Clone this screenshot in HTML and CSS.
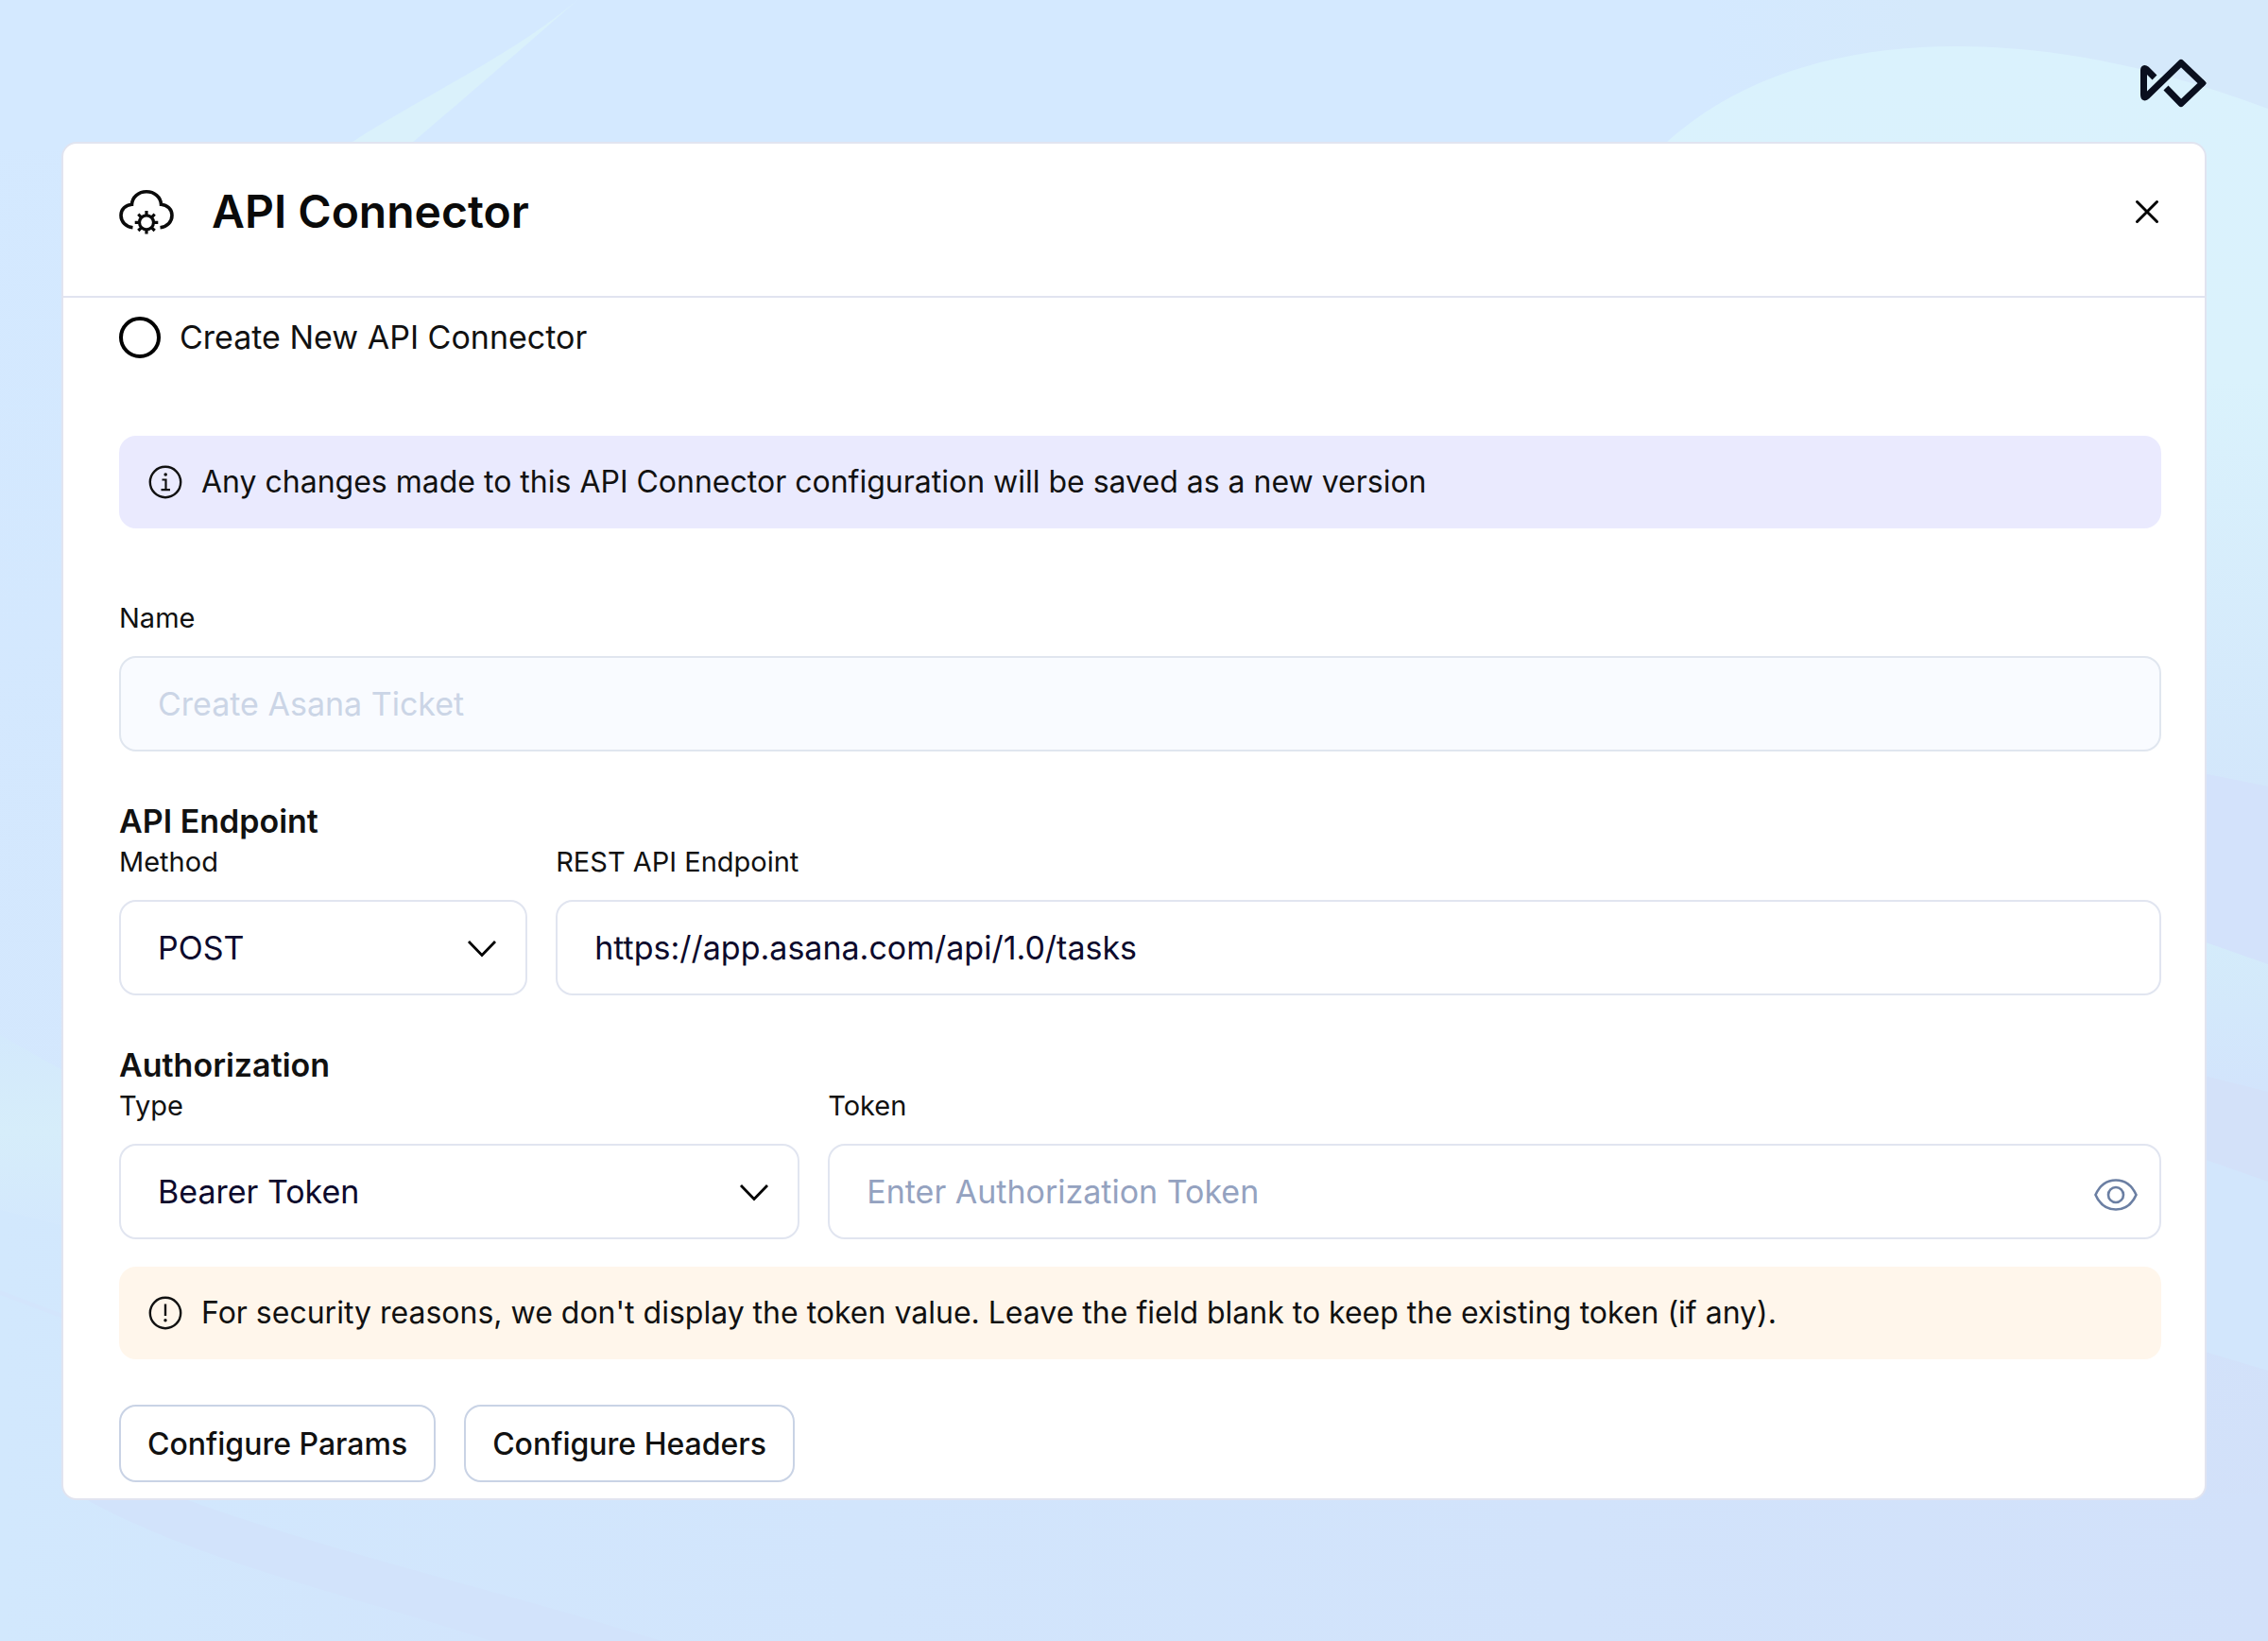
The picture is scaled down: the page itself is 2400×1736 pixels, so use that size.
FILE: index.html
```html
<!DOCTYPE html>
<html lang="en">
<head>
    <meta charset="UTF-8">
    <meta name="viewport" content="width=device-width, initial-scale=1.0">
    <title>API Connector</title>
    <link rel="stylesheet" href="styles.css">
</head>
<body>
    <svg class="backdrop" viewBox="0 0 2400 1736" preserveAspectRatio="none" aria-hidden="true">
        <defs>
            <linearGradient id="bg-base" x1="0" y1="0" x2="1" y2="1">
                <stop offset="0" stop-color="#d4e9ff"/>
                <stop offset="0.6" stop-color="#d3e6fc"/>
                <stop offset="1" stop-color="#d2e0f9"/>
            </linearGradient>
            <linearGradient id="bg-top" x1="0" y1="0" x2="1" y2="0">
                <stop offset="0" stop-color="#d4e9ff"/>
                <stop offset="0.75" stop-color="#d4e9ff"/>
                <stop offset="0.85" stop-color="#d5e9fb"/>
            </linearGradient>
            <linearGradient id="bg-right" x1="0" y1="0" x2="0" y2="1">
                <stop offset="0" stop-color="#daf2fd"/>
                <stop offset="0.45" stop-color="#daf2fc"/>
                <stop offset="1" stop-color="#d3e7fb"/>
            </linearGradient>
            <linearGradient id="bg-fade" x1="0" y1="0" x2="0" y2="1">
                <stop offset="0" stop-color="#d4ecfa"/>
                <stop offset="1" stop-color="#d2e4fc"/>
            </linearGradient>
            <linearGradient id="bg-left" x1="0" y1="0" x2="0" y2="1">
                <stop offset="0" stop-color="#d3e9fc"/>
                <stop offset="0.5" stop-color="#d6edfa"/>
                <stop offset="1" stop-color="#d3e8fd"/>
            </linearGradient>
            <linearGradient id="bg-bottom" x1="0" y1="0" x2="1" y2="0">
                <stop offset="0" stop-color="#d2e7fd"/>
                <stop offset="1" stop-color="#d2e1fa"/>
            </linearGradient>
            <linearGradient id="bg-corner" x1="0" y1="0" x2="1" y2="0">
                <stop offset="0" stop-color="#d2e8fd"/>
                <stop offset="1" stop-color="#d2e5fc"/>
            </linearGradient>
        </defs>
        <rect width="2400" height="1736" fill="url(#bg-base)"/>
        <rect width="2400" height="160" fill="url(#bg-top)"/>
        <path d="M611 0C540 60 450 100 370 152H435C490 105 560 45 611 0Z" fill="#daf1fb"/>
        <path d="M1762 152C1840 80 1950 49 2070 49C2190 49 2300 78 2400 115V832L2300 812V152Z" fill="url(#bg-right)"/>
        <path d="M2300 812L2400 832V1020L2300 985Z" fill="#d3e2fb"/>
        <path d="M2300 985L2400 1020V1155L2300 1130Z" fill="url(#bg-fade)"/>
        <path d="M2300 1130L2400 1155V1250L2300 1215Z" fill="#d3e1f9"/>
        <path d="M2300 1215L2400 1250V1450L2300 1420Z" fill="#d2e6fc"/>
        <path d="M0 1095L80 1140V1300L0 1280Z" fill="url(#bg-left)"/>
        <path d="M0 1280L80 1300V1580H180L520 1736H0Z" fill="url(#bg-corner)"/>
        <path d="M0 1365L80 1395V1400L0 1370Z" fill="#d3e5fc"/>
        <path d="M170 1580H2400V1736H700C520 1700 340 1640 170 1580Z" fill="url(#bg-bottom)"/>
        <path d="M80 1580H180C340 1640 520 1680 700 1736H520C380 1690 200 1650 80 1580Z" fill="#d2e3fb"/>
    </svg>

    <header class="brand">
        <svg class="brand-logo" viewBox="0 0 70 52" role="img" aria-label="Logo">
            <path d="M15 20L6.5 11.5Q3.5 9 3.5 12.5V38Q3.5 43 7 39.500L43 4.500L65.500 26L43 47.500L27 31" fill="none" stroke="#0a0f1e" stroke-width="7" stroke-linejoin="round"/>
            <path d="M62 22L66 22L70 26L66 30L62 30Z" fill="#0a0f1e"/>
        </svg>
    </header>

    <main class="modal">
        <div class="modal-header">
            <svg class="cloud-icon" viewBox="0 0 58 48" aria-hidden="true">
                <g fill="none" stroke="#0a0a0a" stroke-width="3.600">
                    <path d="M14.500 40.800C7 40 2 34.500 2 27.800C2 21.500 7 16.600 13.500 16.200C14 8.500 20.500 2.800 29 2.800C37.500 2.800 44 8.500 44.500 16.200C51 16.600 56 21.500 56 27.800C56 34.500 51 40 43.500 40.800"/>
                    <circle cx="29" cy="35.300" r="7.500" stroke-width="3.200"/>
                    <path d="M29 27.500V23M29 43V47.600M21.200 35.300H16.700M36.800 35.300H41.300M23.500 29.800L20.300 26.600M34.500 29.800L37.700 26.600M23.500 40.800L20.300 44M34.500 40.800L37.700 44" stroke-width="3.200"/>
                </g>
            </svg>
            <h1>API Connector</h1>
            <button type="button" class="close-btn" aria-label="Close">
                <svg viewBox="0 0 26 26"><path d="M2.500 2.500L23.500 23.500M23.500 2.500L2.500 23.500" fill="none" stroke="#000" stroke-width="3" stroke-linecap="round"/></svg>
            </button>
        </div>

        <form class="modal-body">
            <label class="radio-option">
                <input type="radio" name="connector">
                Create New API Connector
            </label>

            <div class="notice notice-info">
                <svg viewBox="0 0 36 36" aria-hidden="true">
                    <circle cx="18" cy="18" r="16.200" fill="none" stroke="#111" stroke-width="2.400"/>
                    <path d="M14.500 15.500H18.500V26M13.500 26.200H23" fill="none" stroke="#111" stroke-width="2.200"/>
                    <circle cx="18.200" cy="10" r="1.800" fill="#111"/>
                </svg>
                <span>Any changes made to this API Connector configuration will be saved as a new version</span>
            </div>

            <div class="field">
                <label for="name">Name</label>
                <input type="text" id="name" value="Create Asana Ticket" disabled>
            </div>

            <section>
                <h2>API Endpoint</h2>
                <div class="field-row endpoint-row">
                    <div class="field">
                        <label for="method">Method</label>
                        <div class="control">
                            <select id="method">
                                <option>POST</option>
                            </select>
                            <svg class="chevron" viewBox="0 0 32 20" aria-hidden="true"><path d="M2 2L16 16.500L30 2" fill="none" stroke="#000" stroke-width="2.800"/></svg>
                        </div>
                    </div>
                    <div class="field">
                        <label for="endpoint">REST API Endpoint</label>
                        <input type="text" id="endpoint" value="https://app.asana.com/api/1.0/tasks">
                    </div>
                </div>
            </section>

            <section>
                <h2>Authorization</h2>
                <div class="field-row auth-row">
                    <div class="field">
                        <label for="auth-type">Type</label>
                        <div class="control">
                            <select id="auth-type">
                                <option>Bearer Token</option>
                            </select>
                            <svg class="chevron" viewBox="0 0 32 20" aria-hidden="true"><path d="M2 2L16 16.500L30 2" fill="none" stroke="#000" stroke-width="2.800"/></svg>
                        </div>
                    </div>
                    <div class="field">
                        <label for="token">Token</label>
                        <div class="control">
                            <input type="password" id="token" placeholder="Enter Authorization Token">
                            <button type="button" class="show-btn" aria-label="Show token">
                                <svg viewBox="0 0 46 36"><path d="M1.500 18C6 8 14 2.500 23 2.500S40 8 44.500 18C40 28 32 33.500 23 33.500S6 28 1.500 18Z" fill="none" stroke="#6b7fa3" stroke-width="2.600"/><circle cx="23" cy="18" r="8" fill="none" stroke="#6b7fa3" stroke-width="2.600"/></svg>
                            </button>
                        </div>
                    </div>
                </div>
            </section>

            <div class="notice notice-warning">
                <svg viewBox="0 0 36 36" aria-hidden="true">
                    <circle cx="18" cy="18" r="16.200" fill="none" stroke="#111" stroke-width="2.400"/>
                    <path d="M18 8.500V21" fill="none" stroke="#111" stroke-width="2.400"/>
                    <circle cx="18" cy="25.800" r="1.700" fill="#111"/>
                </svg>
                <span>For security reasons, we don't display the token value. Leave the field blank to keep the existing token (if any).</span>
            </div>

            <div class="actions">
                <button type="button">Configure Params</button>
                <button type="button">Configure Headers</button>
            </div>
        </form>
    </main>
</body>
</html>
```
FILE: styles.css
```css
* {
    box-sizing: border-box;
}
body {
    margin: 0;
    padding: 62px 65px;
    min-height: 100vh;
    font-family: Inter, "Liberation Sans", sans-serif;
    background-color: #d3e7fd;
    color: #111;
}
svg {
    display: block;
}
h1, h2 {
    margin: 0;
    font-weight: 600;
}
/* Soft coloured waves behind the modal */
.backdrop {
    position: fixed;
    top: 0;
    left: 0;
    width: 100%;
    height: 100%;
    z-index: -1;
}
.brand {
    display: flex;
    justify-content: flex-end;
    margin-bottom: 36px;
}
.brand-logo {
    width: 70px;
    height: 52px;
}
.modal {
    background-color: #fff;
    border: 2px solid #e1e4f0;
    border-radius: 16px;
}
.modal-header {
    display: flex;
    align-items: center;
    padding: 43px 48px 60px 59px;
    border-bottom: 2px solid #e1e4f0;
}
.cloud-icon {
    width: 58px;
    height: 48px;
    margin-right: 40px;
}
h1 {
    flex: 1;
    color: #0a0a0a;
    font-size: 48px;
    line-height: 58px;
}
.close-btn {
    padding: 0;
    border: none;
    background: none;
    cursor: pointer;
}
.close-btn svg {
    width: 26px;
    height: 26px;
}
.modal-body {
    padding: 20px 46px 17px 59px;
}
.radio-option {
    display: flex;
    align-items: center;
    gap: 20px;
    margin-bottom: 82px;
    font-size: 34px;
    line-height: 44px;
}
.radio-option input {
    appearance: none;
    width: 44px;
    height: 44px;
    margin: 0;
    border: 4px solid #000;
    border-radius: 50%;
}
.notice {
    display: flex;
    align-items: center;
    gap: 20px;
    padding: 28px 31px;
    border-radius: 18px;
    font-size: 32px;
    line-height: 42px;
}
.notice svg {
    flex: none;
    width: 36px;
    height: 36px;
}
.notice-info {
    margin-bottom: 77px;
    background-color: #eaeafe;
}
.notice-warning {
    margin: 29px 0 48px;
    background-color: #fff6eb;
}
.field label {
    display: block;
    margin-bottom: 22px;
    font-size: 29px;
    line-height: 36px;
}
.field input,
.field select {
    display: block;
    width: 100%;
    height: 101px;
    padding: 0 39px;
    border: 2px solid #e1e5f0;
    border-radius: 18px;
    appearance: none;
    background-color: #fff;
    color: #0d0a2c;
    font-family: inherit;
    font-size: 34px;
}
.field input:disabled {
    background-color: #f9fbff;
    border-color: #e0e6ef;
    color: #cbd5e6;
}
.field input::placeholder {
    color: #94a2c0;
    opacity: 1;
}
section {
    margin-top: 49px;
}
h2 {
    font-size: 34px;
    line-height: 50px;
}
.field-row {
    display: grid;
    column-gap: 30px;
}
.endpoint-row {
    grid-template-columns: 20% 1fr;
}
.auth-row {
    grid-template-columns: 33.33% 1fr;
}
.control {
    position: relative;
}
.chevron {
    position: absolute;
    top: 42px;
    right: 32px;
    width: 32px;
    height: 20px;
    pointer-events: none;
}
.show-btn {
    position: absolute;
    top: 36px;
    right: 25px;
    padding: 0;
    border: none;
    background: none;
    cursor: pointer;
}
.show-btn svg {
    width: 46px;
    height: 36px;
}
.actions {
    display: flex;
    gap: 30px;
}
.actions button {
    height: 82px;
    padding: 0 28px;
    border: 2px solid #c9d3e5;
    border-radius: 18px;
    background-color: #fff;
    color: #111;
    font-family: inherit;
    font-size: 32px;
    font-weight: 500;
    cursor: pointer;
}
```
